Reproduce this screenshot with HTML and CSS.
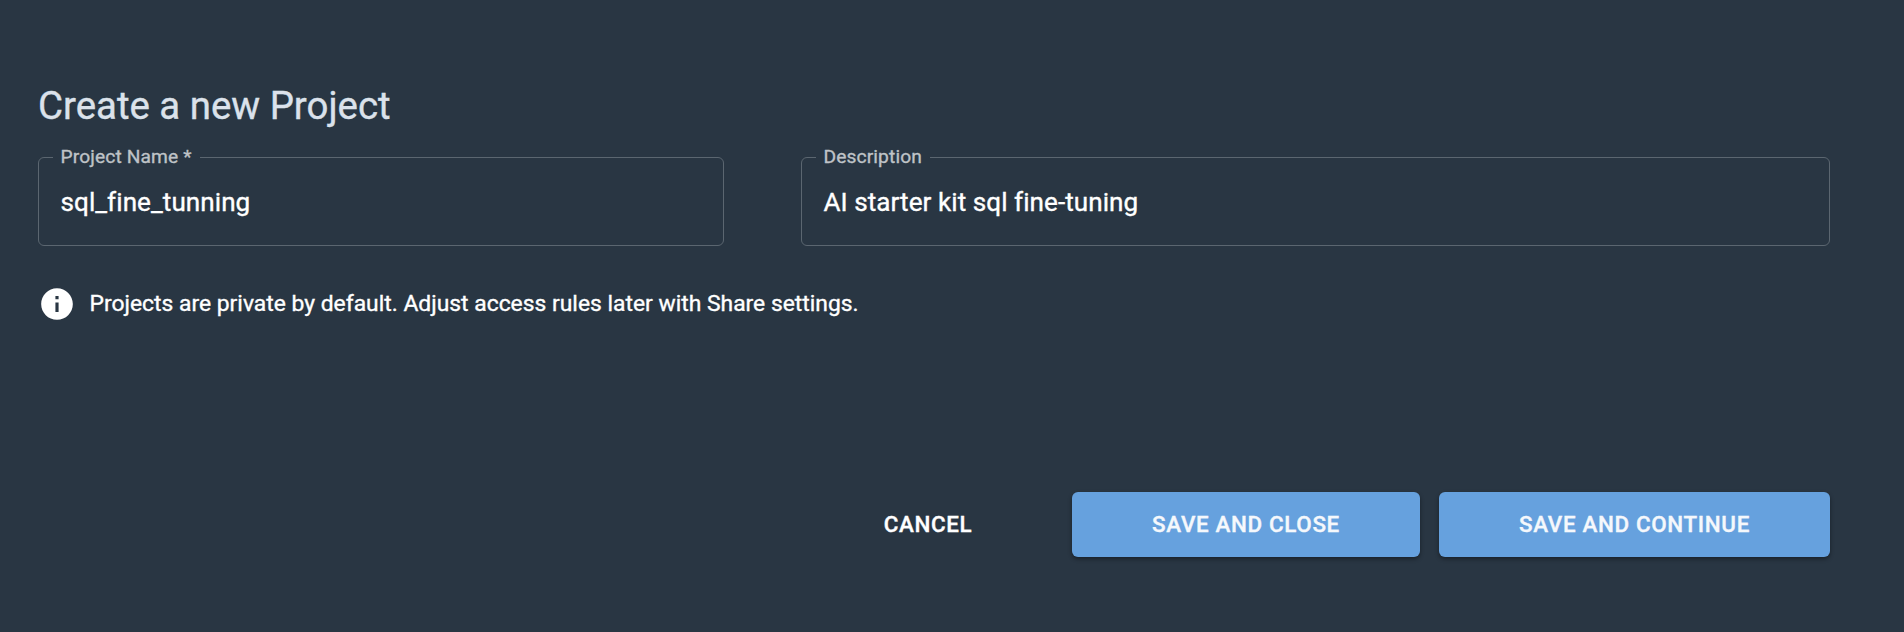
FILE: index.html
```html
<!DOCTYPE html>
<html lang="en">
<head>
<meta charset="utf-8">
<title>Create a new Project</title>
<link rel="stylesheet" href="styles.css">
</head>
<body>
<main class="page">
  <h1 class="title">Create a new Project</h1>
  <div class="fields">
    <fieldset class="field"><legend class="label">Project Name *</legend><div class="value">sql_fine_tunning</div></fieldset>
    <fieldset class="field"><legend class="label">Description</legend><div class="value">AI starter kit sql fine-tuning</div></fieldset>
  </div>
  <div class="note">
    <svg class="info" viewBox="0 0 24 24"><path fill="#fff" d="M12 2C6.48 2 2 6.48 2 12s4.480 10 10 10 10-4.480 10-10S17.520 2 12 2zm1 15h-2v-6h2v6zm0-8h-2V7h2v2z"/></svg>
    <span class="note-text">Projects are private by default. Adjust access rules later with Share settings.</span>
  </div>
  <div class="actions">
    <button class="cancel">CANCEL</button>
    <button class="primary close">SAVE AND CLOSE</button>
    <button class="primary continue">SAVE AND CONTINUE</button>
  </div>
</main>
</body>
</html>
```
FILE: styles.css
```css
* { box-sizing: border-box; }
body { margin: 0; background: #293643; color: #fff; font-family: Roboto, sans-serif; -webkit-text-stroke: .35px currentColor; }
.page { height: 632px; padding: 80px 74px 0 38px; overflow: hidden; }
.title { margin: 0; height: 69px; font-size: 38.4px; line-height: 52px; font-weight: 400; color: #dbe2eb; }
.fields { display: grid; grid-template-columns: 686px 1029px; gap: 77px; }
.field { margin: 0; min-width: 0; height: 97px; padding: 0 13.5px; border: 1px solid #5b6670; border-radius: 6px; }
.label { padding: 0 8px; height: 17px; font-size: 19.2px; line-height: 15px; letter-spacing: .12px; color: #bfc3c7; }
.value { padding: 20px 8px 0; font-size: 26.1px; line-height: 32px; letter-spacing: .05px; }
.note { display: flex; align-items: center; height: 40px; margin-top: 38px; }
.info { width: 38px; height: 38px; }
.note-text { margin-left: 13.5px; font-size: 22.87px; line-height: 28px; margin-top: -1px; }
.actions { display: flex; justify-content: flex-end; height: 65px; margin-top: 168px; }
.actions button { border: 0; padding: 0 0 2px; color: #fff; font: 500 22.4px Roboto, sans-serif; letter-spacing: .65px; -webkit-text-stroke: .35px currentColor; }
.actions .cancel { width: 90px; margin-right: 99px; background: none; }
.actions .primary { color: #f5f8fc; background: #66a1de; border-radius: 6px; box-shadow: 0 2px 4px rgba(0,0,0,.4); }
.close { width: 348px; margin-right: 19px; }
.continue { width: 391px; }
```
